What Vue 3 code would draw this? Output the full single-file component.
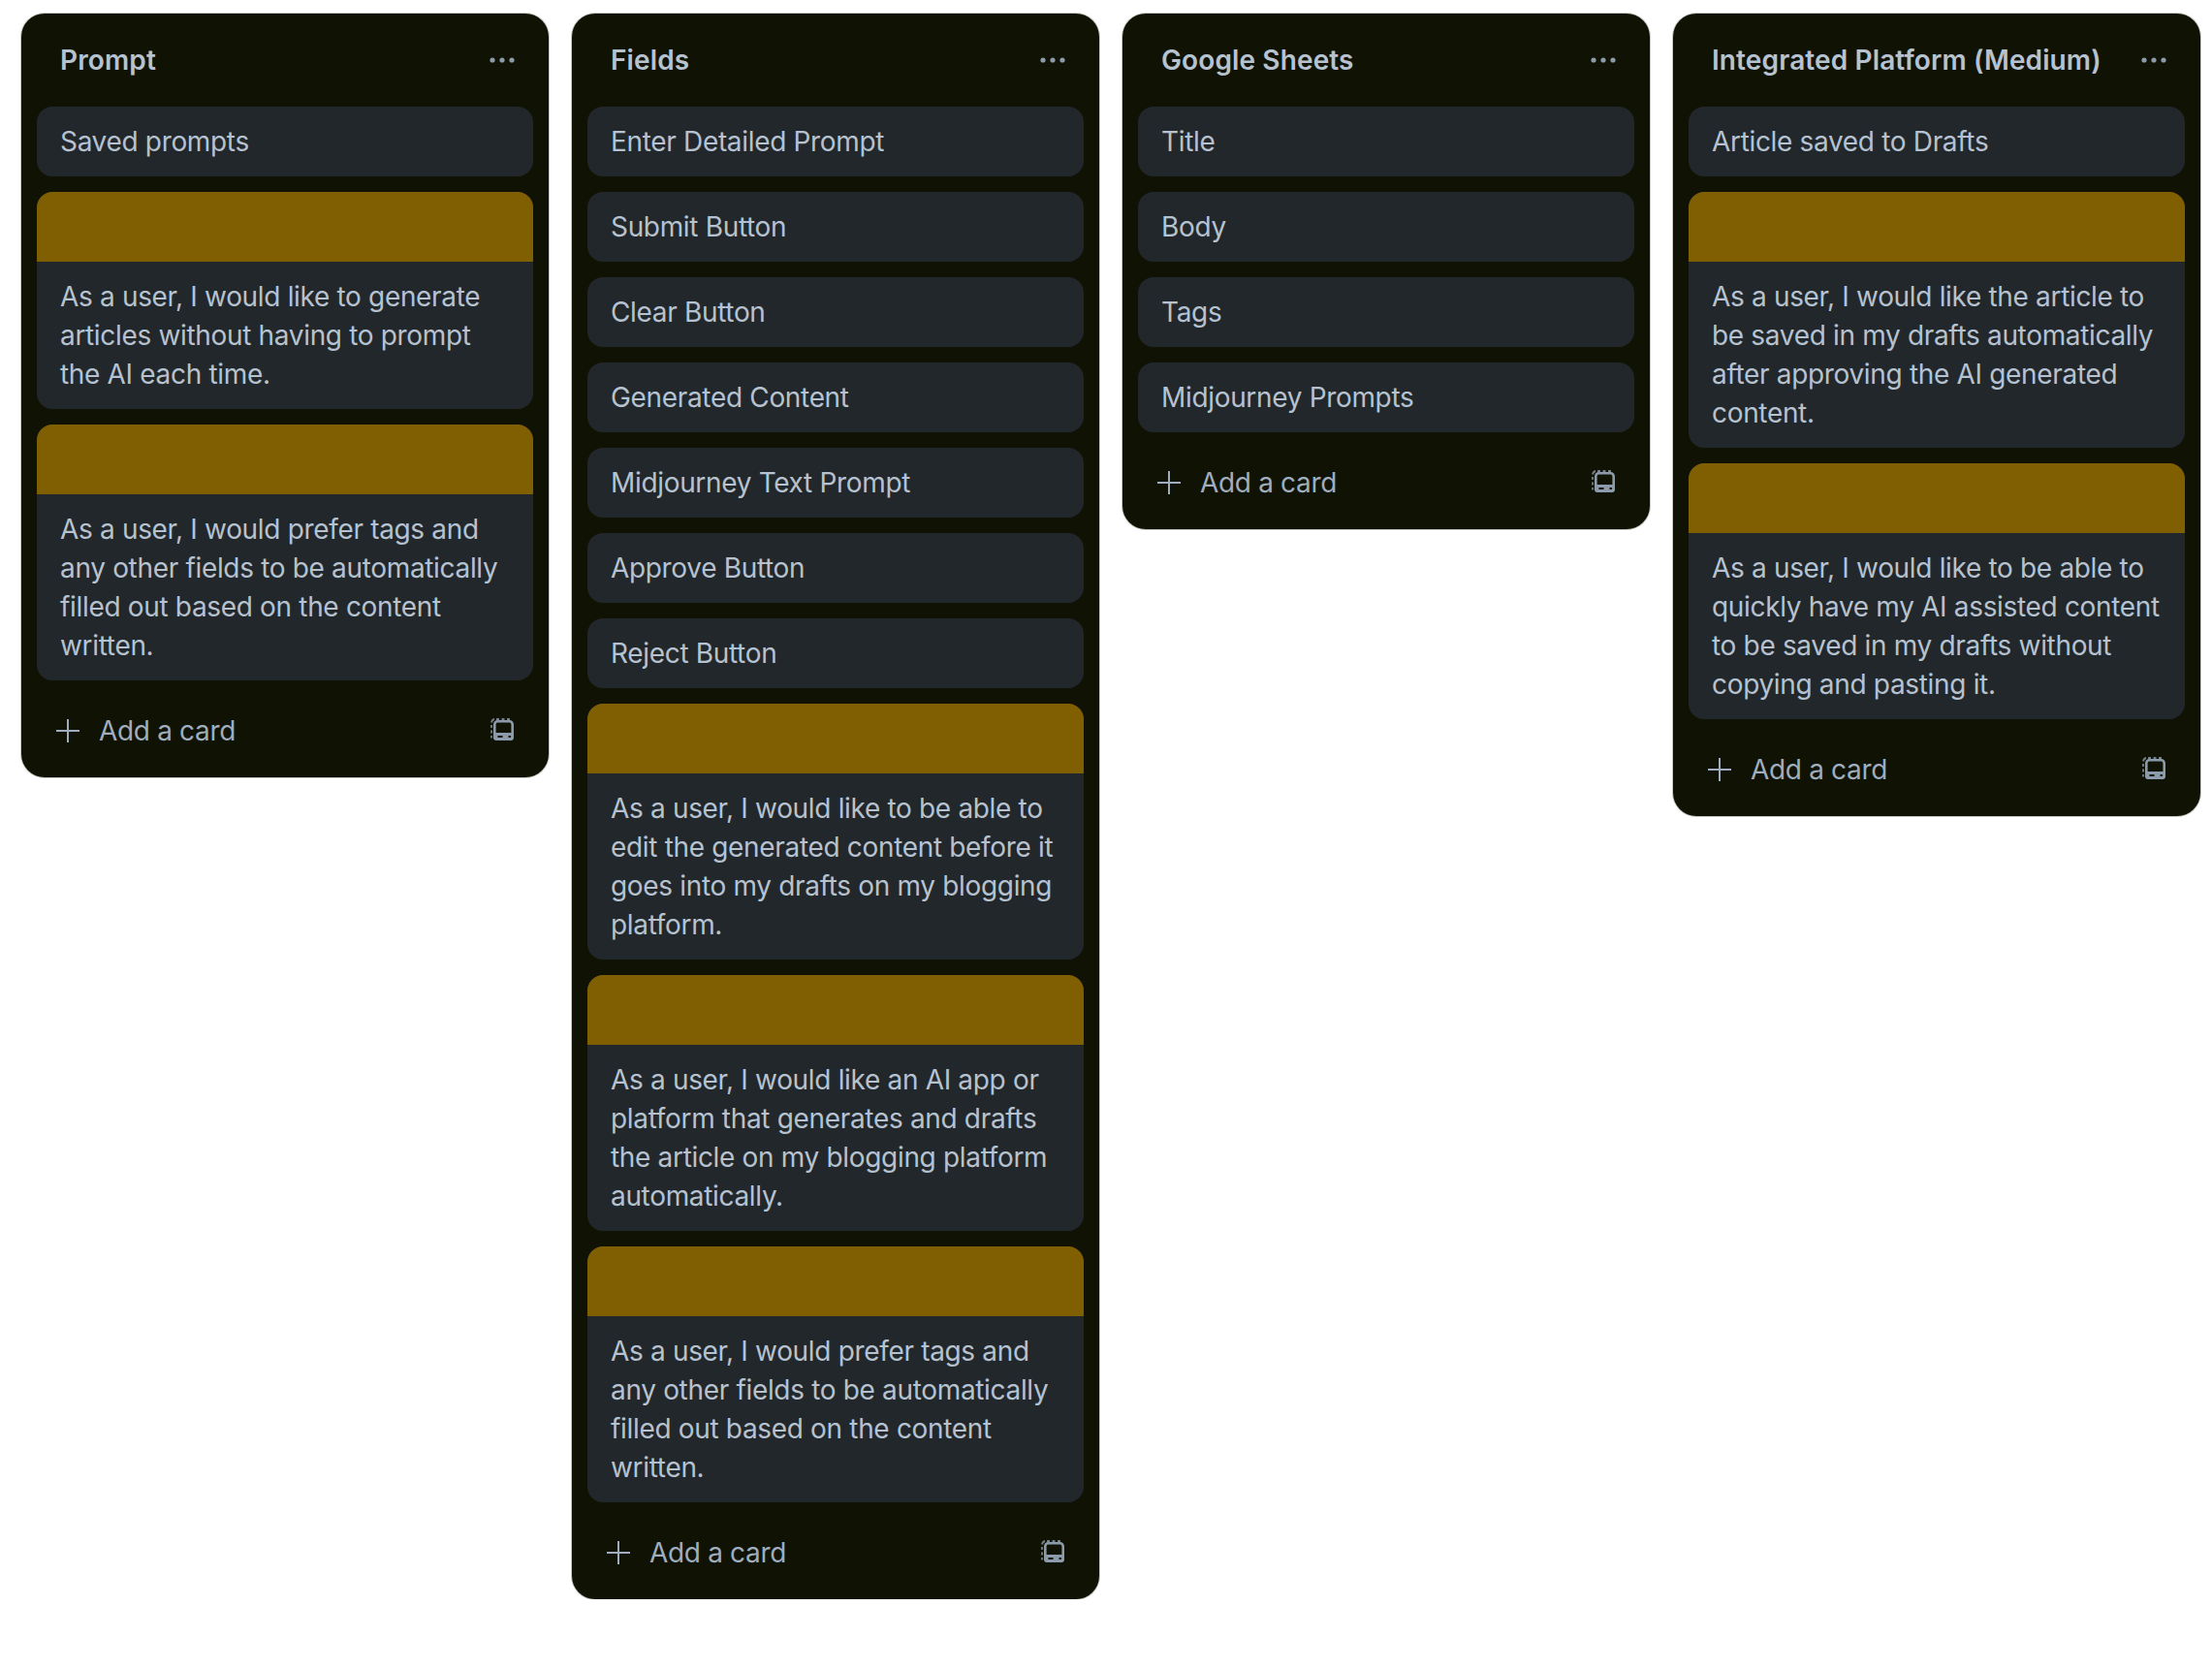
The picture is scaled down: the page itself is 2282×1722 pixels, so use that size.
<script setup>
const columns = [
  { title: 'Prompt', cards: [
    { text: 'Saved prompts' },
    { text: 'As a user, I would like to generate articles without having to prompt the AI each time.', cover: true },
    { text: 'As a user, I would prefer tags and any other fields to be automatically filled out based on the content written.', cover: true },
  ]},
  { title: 'Fields', cards: [
    { text: 'Enter Detailed Prompt' },
    { text: 'Submit Button' },
    { text: 'Clear Button' },
    { text: 'Generated Content' },
    { text: 'Midjourney Text Prompt' },
    { text: 'Approve Button' },
    { text: 'Reject Button' },
    { text: 'As a user, I would like to be able to edit the generated content before it goes into my drafts on my blogging platform.', cover: true },
    { text: 'As a user, I would like an AI app or platform that generates and drafts the article on my blogging platform automatically.', cover: true },
    { text: 'As a user, I would prefer tags and any other fields to be automatically filled out based on the content written.', cover: true },
  ]},
  { title: 'Google Sheets', cards: [
    { text: 'Title' },
    { text: 'Body' },
    { text: 'Tags' },
    { text: 'Midjourney Prompts' },
  ]},
  { title: 'Integrated Platform (Medium)', cards: [
    { text: 'Article saved to Drafts' },
    { text: 'As a user, I would like the article to be saved in my drafts automatically after approving the AI generated content.', cover: true },
    { text: 'As a user, I would like to be able to quickly have my AI assisted content to be saved in my drafts without copying and pasting it.', cover: true },
  ]},
]
</script>

<template>
  <div class="board">
    <section v-for="col in columns" :key="col.title" class="column">
      <header class="col-head">
        <h2 class="col-title">{{ col.title }}</h2>
        <svg class="kebab" width="32" height="32" viewBox="0 0 32 32" fill="currentColor">
          <circle cx="6" cy="16" r="2.600" /><circle cx="16" cy="16" r="2.600" /><circle cx="26" cy="16" r="2.600" />
        </svg>
      </header>
      <div class="cards">
        <article v-for="(card, i) in col.cards" :key="i" class="card">
          <div v-if="card.cover" class="cover"></div>
          <p class="card-text">{{ card.text }}</p>
        </article>
      </div>
      <footer class="col-foot">
        <div class="add">
          <svg class="plus" width="24" height="24" viewBox="0 0 24 24" stroke="currentColor" stroke-width="2">
            <path d="M12 0V24M0 12H24" />
          </svg>
          <span>Add a card</span>
        </div>
        <svg class="template" width="26" height="26" viewBox="0 0 26 26" fill="none">
          <path d="M7 2h3M12.500 2h3M18 2h3M2 8v3M2 13.500v3M2 19v2.500M2 5.500C2.300 3.500 3.500 2.300 5 2" stroke="currentColor" stroke-width="1.800" opacity="0.8" />
          <rect x="5.300" y="4.300" width="18.400" height="18.400" rx="3" stroke="currentColor" stroke-width="2.600" />
          <path d="M4 16h21v5a3 3 0 0 1-3 3H7a3 3 0 0 1-3-3z" fill="currentColor" />
          <path d="M8.500 20h5M19.500 20h2.500" stroke="#101204" stroke-width="2.200" />
        </svg>
      </footer>
    </section>
  </div>
</template>

<style scoped>
.board {
  display: flex;
  align-items: flex-start;
  gap: 24px;
  padding: 14px 0 0 22px;
  font-family: Inter, "Liberation Sans", sans-serif;
  font-size: 28px;
  line-height: 40px;
  letter-spacing: -0.33px;
}
.column {
  flex: none;
  box-sizing: border-box;
  width: 544px;
  background: #101204;
  border-radius: 24px;
  box-shadow: 0 0 0 1px #c8c8c4;
  color: #b6c2cf;
}
.col-head {
  display: flex;
  align-items: center;
  justify-content: space-between;
  height: 96px;
  padding: 0 32px 0 40px;
  box-sizing: border-box;
}
.col-title {
  margin: 0;
  font-size: 28px;
  font-weight: 600;
  line-height: 40px;
  letter-spacing: 0.12px;
}
.kebab {
  color: #8c9bab;
}
.cards {
  display: flex;
  flex-direction: column;
  gap: 16px;
  padding: 0 16px;
}
.card {
  background: #22272b;
  border-radius: 16px;
  overflow: hidden;
}
.cover {
  height: 72px;
  background: #7f5f01;
}
.card-text {
  margin: 0;
  padding: 16px 24px;
}
.col-foot {
  display: flex;
  align-items: center;
  justify-content: space-between;
  box-sizing: border-box;
  height: 100px;
  padding: 4px 36px 0 36px;
  color: #9fadbc;
}
.add {
  display: flex;
  align-items: center;
  gap: 20px;
}
.plus {
  color: #9fadbc;
}
.template {
  margin-right: -1px;
  margin-bottom: 2px;
  color: #8c9bab;
}
</style>
